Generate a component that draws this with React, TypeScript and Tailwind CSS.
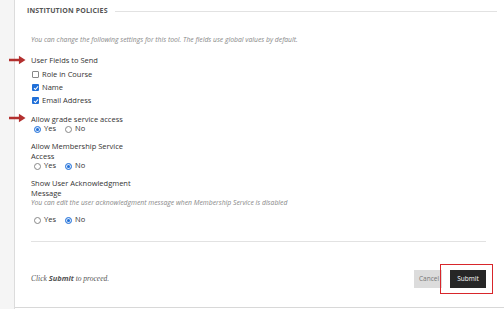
import React from 'react'

const font = { fontFamily: '"Open Sans", "Liberation Sans", sans-serif' }

function Arrow({ className }: { className: string }) {
  return (
    <svg viewBox="0 0 18 10" className={`absolute h-[10px] w-[17px] ${className}`}>
      <path d="M0 3.6 H10.5 V0.5 L17.5 5 L10.5 9.5 V6.4 H0 Z" fill="#b3302f" />
    </svg>
  )
}

function Checkbox({ checked, label }: { checked?: boolean; label: string }) {
  return (
    <div className="flex h-[13px] items-center gap-[3px]">
      {checked ? (
        <span className="flex h-[7px] w-[7px] items-center justify-center rounded-[1px] bg-[#1f6fd8]">
          <svg viewBox="0 0 8 8" className="h-[6px] w-[6px]">
            <path d="M1.3 4.2 L3.2 6 L6.8 1.8" stroke="white" strokeWidth="1.4" fill="none" />
          </svg>
        </span>
      ) : (
        <span className="h-[7px] w-[7px] rounded-[1px] border border-[#888] bg-white" />
      )}
      <span className="text-[7.5px] text-[#333]">{label}</span>
    </div>
  )
}

function Radio({ checked, label }: { checked?: boolean; label: string }) {
  return (
    <span className="flex items-center gap-[3px]">
      {checked ? (
        <span className="flex h-[7px] w-[7px] items-center justify-center rounded-full border border-[#1f6fd8] bg-[#d6e6fb]">
          <span className="h-[3px] w-[3px] rounded-full bg-[#1f6fd8]" />
        </span>
      ) : (
        <span className="h-[7px] w-[7px] rounded-full border border-[#888] bg-white" />
      )}
      <span className="text-[7.5px] text-[#333]">{label}</span>
    </span>
  )
}

function YesNo({ yes }: { yes: boolean }) {
  return (
    <div className="flex h-[10px] items-center gap-[9px] pl-[3px]">
      <Radio checked={yes} label="Yes" />
      <Radio checked={!yes} label="No" />
    </div>
  )
}

export default function App() {
  return (
    <div className="relative flex h-[309px] w-[504px] overflow-hidden bg-white" style={font}>
      <div className="w-[15px] shrink-0 border-r border-[#dcdcdc] bg-[#f5f5f5]" />

      <div className="flex h-[308px] flex-1 flex-col border-b border-[#d8d8d8]">
        <div className="mt-[5px] flex h-[12px] items-center gap-[7px] pl-[12px] pr-[7px]">
          <span className="text-[7px] font-bold tracking-[0.02em] text-[#555]">INSTITUTION POLICIES</span>
          <span className="h-px flex-1 bg-[#e2e2e2]" />
        </div>

        <div className="flex flex-col pl-[16px] pr-[18px]">
          <p className="mt-[18px] h-[10px] text-[6.8px] leading-[10px] italic text-[#888]">
            You can change the following settings for this tool. The fields use global values by default.
          </p>

          <p className="mt-[10px] h-[10px] text-[7.5px] leading-[10px] text-[#333]">User Fields to Send</p>
          <div className="mt-[3px] flex flex-col pl-[1px]">
            <Checkbox label="Role in Course" />
            <Checkbox checked label="Name" />
            <Checkbox checked label="Email Address" />
          </div>

          <p className="mt-[7px] h-[10px] text-[7.5px] leading-[10px] text-[#333]">Allow grade service access</p>
          <YesNo yes />

          <p className="mt-[7px] text-[7.5px] leading-[10px] text-[#333]">
            Allow Membership Service
            <br />
            Access
          </p>
          <YesNo yes={false} />

          <p className="mt-[7px] text-[7.5px] leading-[10px] text-[#333]">
            Show User Acknowledgment
            <br />
            Message
          </p>
          <p className="h-[10px] text-[6.8px] leading-[10px] italic text-[#888]">
            You can edit the user acknowledgment message when Membership Service is disabled
          </p>
          <div className="mt-[7px]">
            <YesNo yes={false} />
          </div>

          <div className="mt-[16px] h-px bg-[#e2e2e2]" />

          <div className="mt-[28px] flex items-center justify-between">
            <p className="text-[7.5px] italic text-[#555]" style={{ fontFamily: '"Liberation Serif", serif' }}>
              Click{' '}
              <span className="font-bold" style={font}>
                Submit
              </span>{' '}
              to proceed.
            </p>
            <div className="flex items-center gap-[8px]">
              <button className="flex h-[18px] w-[28px] items-center justify-start overflow-hidden bg-[#dcdcdc] pl-[5px] text-[6.5px] text-[#777]">
                Cancel
              </button>
              <button className="flex h-[18px] w-[36px] items-center justify-center bg-[#262626] text-[6.5px] text-white">
                Submit
              </button>
            </div>
          </div>
        </div>
      </div>

      <Arrow className="left-[9px] top-[55px]" />
      <Arrow className="left-[9px] top-[113px]" />
      <div className="absolute left-[440px] top-[264px] h-[30px] w-[53px] border-[1.5px] border-[#d8262b]" />
    </div>
  )
}
